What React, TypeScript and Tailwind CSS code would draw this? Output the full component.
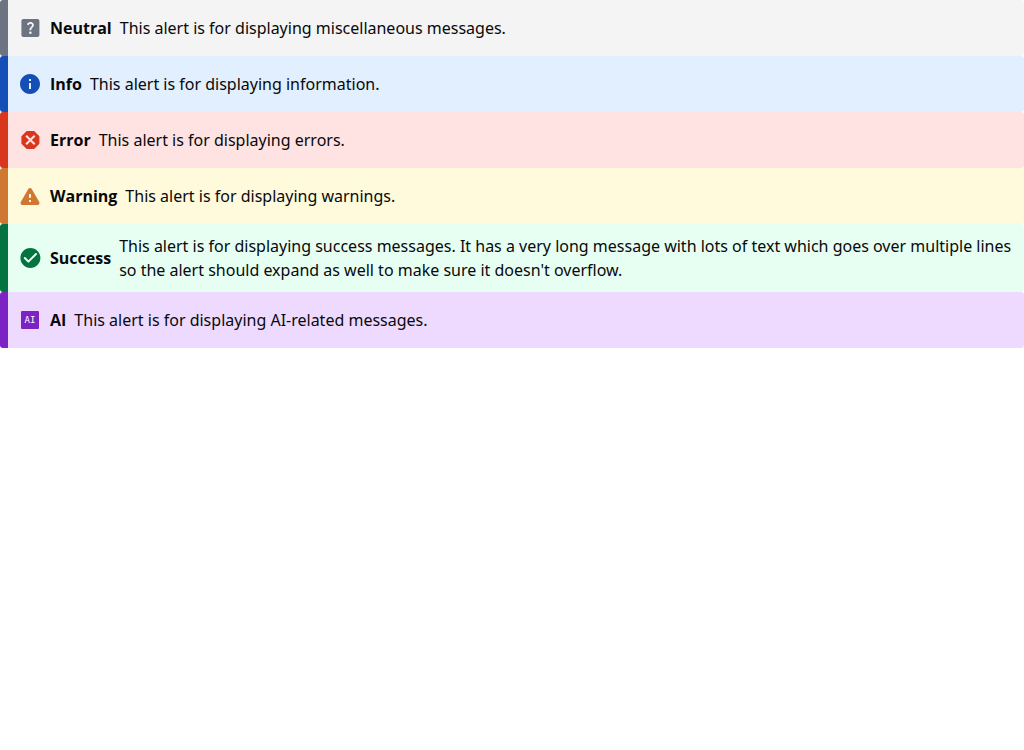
import type { ReactNode } from "react";

type AlertProps = {
  title: string;
  tone: string;
  icon: ReactNode;
  children: ReactNode;
};

function Icon({
  className,
  viewBox = "0 0 24 24",
  children,
}: {
  className: string;
  viewBox?: string;
  children: ReactNode;
}) {
  return (
    <svg viewBox={viewBox} aria-hidden="true" className={`size-6 shrink-0 fill-current ${className}`}>
      {children}
    </svg>
  );
}

function Alert({ title, tone, icon, children }: AlertProps) {
  return (
    <div
      role="alert"
      className={`flex min-h-14 items-center gap-2 rounded-[3px] border-l-8 py-2.5 pr-3 pl-2.5 ${tone}`}
    >
      {icon}
      <strong className="font-['Open_Sans',sans-serif] font-bold">{title}</strong>
      <p>{children}</p>
    </div>
  );
}

export default function App() {
  return (
    <main className="bg-white font-['Noto_Sans',sans-serif] text-base leading-6 text-[#08090b]">
      <Alert
        title="Neutral"
        tone="border-[#6b7480] bg-[#f4f4f4]"
        icon={
          <Icon className="text-[#6b7480]" viewBox="-0.4 0 24 24">
            <path d="M19 3H5c-1.1 0-2 .9-2 2v14c0 1.1.9 2 2 2h14c1.1 0 2-.9 2-2V5c0-1.1-.9-2-2-2zm-6.99 15c-.7 0-1.26-.56-1.26-1.26 0-.71.56-1.25 1.26-1.25.71 0 1.25.54 1.25 1.25-.01.69-.54 1.26-1.25 1.26zm3.01-7.4c-.76 1.11-1.48 1.46-1.87 2.17-.16.29-.22.48-.22 1.41h-1.82c0-.49-.08-1.29.31-1.98.49-.87 1.42-1.39 1.96-2.16.57-.81.25-2.33-1.37-2.33-1.06 0-1.58.8-1.8 1.48l-1.65-.7C9.01 7.15 10.22 6 11.99 6c1.48 0 2.49.67 3.01 1.52.44.72.7 2.07.02 3.08z" />
          </Icon>
        }
      >
        This alert is for displaying miscellaneous messages.
      </Alert>
      <Alert
        title="Info"
        tone="border-[#144fb8] bg-[#e1effe]"
        icon={
          <Icon className="text-[#144fb8]">
            <path d="M12 2C6.48 2 2 6.48 2 12s4.48 10 10 10 10-4.48 10-10S17.52 2 12 2zm1 15h-2v-6h2v6zm0-8h-2V7h2v2z" />
          </Icon>
        }
      >
        This alert is for displaying information.
      </Alert>
      <Alert
        title="Error"
        tone="border-[#d9361e] bg-[#ffe3e3]"
        icon={
          <Icon className="text-[#d9361e]" viewBox="-0.4 0 24 24">
            <path d="M8.27 3L3 8.27v7.46L8.27 21h7.46L21 15.73V8.27L15.73 3M8.41 7L12 10.59 15.59 7 17 8.41 13.41 12 17 15.59 15.59 17 12 13.41 8.41 17 7 15.59 10.59 12 7 8.41" />
          </Icon>
        }
      >
        This alert is for displaying errors.
      </Alert>
      <Alert
        title="Warning"
        tone="border-[#d07832] bg-[#fffadb]"
        icon={
          <Icon className="text-[#d07832]">
            <path d="M4.47 21h15.06c1.54 0 2.5-1.67 1.73-3L13.73 4.99c-.77-1.33-2.69-1.33-3.46 0L2.74 18c-.77 1.33.19 3 1.73 3zM12 14c-.55 0-1-.45-1-1v-2c0-.55.45-1 1-1s1 .45 1 1v2c0 .55-.45 1-1 1zm1 4h-2v-2h2v2z" />
          </Icon>
        }
      >
        This alert is for displaying warnings.
      </Alert>
      <Alert
        title="Success"
        tone="border-[#03733f] bg-[#e7fff3]"
        icon={
          <Icon className="text-[#03733f]" viewBox="-0.4 0 24 24">
            <path d="M12 2C6.48 2 2 6.48 2 12s4.48 10 10 10 10-4.48 10-10S17.52 2 12 2zM9.29 16.29L5.7 12.7a.996.996 0 111.41-1.41L10 14.17l6.88-6.88a.996.996 0 111.41 1.41l-7.59 7.59a.996.996 0 01-1.41 0z" />
          </Icon>
        }
      >
        This alert is for displaying success messages. It has a very long message with lots of text
        which goes over multiple lines so the alert should expand as well to make sure it
        doesn't overflow.
      </Alert>
      <Alert
        title="AI"
        tone="border-[#7d22c3] bg-[#eedaff]"
        icon={
          <Icon className="text-[#7d22c3]">
            <rect x="3" y="3" width="18" height="18" rx="1" />
            <text
              x="12"
              y="15"
              textAnchor="middle"
              className="fill-white font-['DejaVu_Sans_Mono',monospace] text-[9px]"
            >
              AI
            </text>
          </Icon>
        }
      >
        This alert is for displaying AI-related messages.
      </Alert>
    </main>
  );
}
